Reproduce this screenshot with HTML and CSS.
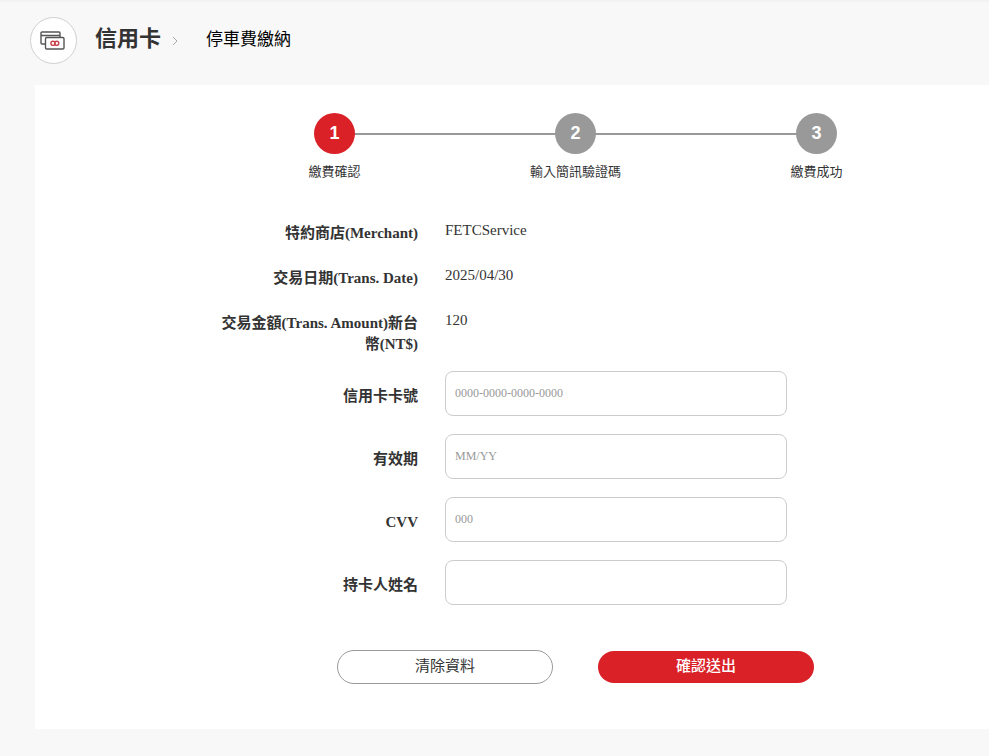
FILE: index.html
```html
<!DOCTYPE html>
<html lang="zh-Hant">
<head>
    <meta charset="UTF-8">
    <meta name="viewport" content="width=device-width, initial-scale=1.0">
    <title>停車費繳納</title>
    <link rel="stylesheet" href="styles.css">
</head>
<body>

<header class="page-header">
    <span class="header-icon">
        <svg width="26" height="19" viewBox="0 0 26 19" fill="none" stroke="#555" stroke-width="1.4" aria-hidden="true">
            <path d="M5 13H2a1 1 0 0 1-1-1V2a1 1 0 0 1 1-1h17a1 1 0 0 1 1 1v4M1 4.5h19"/>
            <rect x="5.5" y="6.5" width="18.5" height="11.5" rx="1.2" fill="#fff"/>
            <g stroke="#c8434b" stroke-width="1.4">
                <circle cx="13" cy="12.3" r="2.1"/>
                <circle cx="16.7" cy="12.3" r="2.1"/>
            </g>
        </svg>
    </span>
    <h1>信用卡</h1>
    <svg class="chevron" width="6" height="10" viewBox="0 0 6 10" fill="none" stroke="#aaa" aria-hidden="true">
        <path d="M1 1l4 4-4 4"/>
    </svg>
    <span class="page-name">停車費繳納</span>
</header>

<main class="card">
    <ol class="steps">
        <li class="step active"><span class="step-num">1</span>繳費確認</li>
        <li class="step"><span class="step-num">2</span>輸入簡訊驗證碼</li>
        <li class="step"><span class="step-num">3</span>繳費成功</li>
    </ol>

    <form>
        <dl class="info">
            <div class="row">
                <dt>特約商店(Merchant)</dt>
                <dd>FETCService</dd>
            </div>
            <div class="row">
                <dt>交易日期(Trans. Date)</dt>
                <dd>2025/04/30</dd>
            </div>
            <div class="row">
                <dt>交易金額(Trans. Amount)新台幣(NT$)</dt>
                <dd>120</dd>
            </div>
        </dl>

        <div class="fields">
            <div class="row">
                <label for="card-no">信用卡卡號</label>
                <input type="text" id="card-no" placeholder="0000-0000-0000-0000">
            </div>
            <div class="row">
                <label for="expiry">有效期</label>
                <input type="text" id="expiry" placeholder="MM/YY">
            </div>
            <div class="row">
                <label for="cvv">CVV</label>
                <input type="text" id="cvv" placeholder="000">
            </div>
            <div class="row">
                <label for="holder">持卡人姓名</label>
                <input type="text" id="holder">
            </div>
        </div>

        <div class="buttons">
            <button type="reset" class="btn">清除資料</button>
            <button type="submit" class="btn btn-primary">確認送出</button>
        </div>
    </form>
</main>

</body>
</html>
```
FILE: styles.css
```css
* {
    box-sizing: border-box;
}
body {
    margin: 0;
    padding-bottom: 27px;
    background-color: #f8f8f8;
    border-top: 2px solid #f2f2f2;
    color: #333;
    font-family: "Liberation Serif", "Noto Sans CJK TC", serif;
    font-size: 15px;
    line-height: 21px;
}

/* header */
.page-header {
    display: flex;
    align-items: center;
    padding: 15px 30px 21px;
}
.header-icon {
    display: flex;
    align-items: center;
    justify-content: center;
    width: 47px;
    height: 47px;
    padding-right: 2px;
    border: 1px solid #d0d0d0;
    border-radius: 50%;
    background-color: #fff;
}
h1 {
    margin: 0 11px 0 18px;
    padding-bottom: 4px;
    font-size: 22px;
    line-height: 32px;
}
.page-name {
    margin-left: 28px;
    padding-bottom: 2px;
    color: #000;
    font-size: 17px;
}

.card {
    margin-left: 35px;
    padding: 28px 52px 45px 179px;
    background-color: #fff;
}

/* steps */
.steps {
    display: grid;
    grid-template-columns: repeat(3, 1fr);
    margin: 0 0 38px;
    padding: 0;
    list-style: none;
}
.step {
    position: relative;
    display: flex;
    flex-direction: column;
    align-items: center;
    gap: 7px;
    font-size: 13px;
}
.step + .step::before {
    content: "";
    position: absolute;
    top: 20px;
    right: 50%;
    width: 100%;
    height: 2px;
    background-color: #999;
}
.step-num {
    z-index: 1;
    width: 41px;
    height: 41px;
    border-radius: 50%;
    background-color: #999;
    color: #fff;
    font: bold 18px/41px "Liberation Sans", sans-serif;
    text-align: center;
}
.active .step-num {
    background-color: #da2128;
}

/* form rows */
.row {
    display: grid;
    grid-template-columns: 204px minmax(0, 342px);
    column-gap: 27px;
}
.info {
    display: grid;
    row-gap: 21px;
    margin: 0 0 16px;
}
dt, label {
    padding-top: 3px;
    font-weight: bold;
    text-align: right;
}
dd {
    margin: 0;
}
.fields {
    display: grid;
    row-gap: 18px;
}
.fields .row {
    align-items: center;
}
label {
    padding-top: 5px;
}
input {
    width: 100%;
    height: 45px;
    padding: 0 9px;
    border: 1px solid #ccc;
    border-radius: 8px;
    background-color: #fff;
    color: #333;
    font-family: inherit;
    font-size: 12px;
}
input::placeholder {
    color: #999;
}

.buttons {
    display: flex;
    justify-content: center;
    align-items: center;
    gap: 45px;
    margin-top: 45px;
}
.btn {
    width: 216px;
    height: 34px;
    padding: 0 0 5px;
    border: 1px solid #999;
    border-radius: 17px;
    background-color: #fff;
    color: #333;
    font-family: inherit;
    font-size: 15px;
    cursor: pointer;
}
.btn-primary {
    height: 32px;
    border: none;
    background-color: #da2128;
    color: #fff;
    font-weight: 500;
}
```
